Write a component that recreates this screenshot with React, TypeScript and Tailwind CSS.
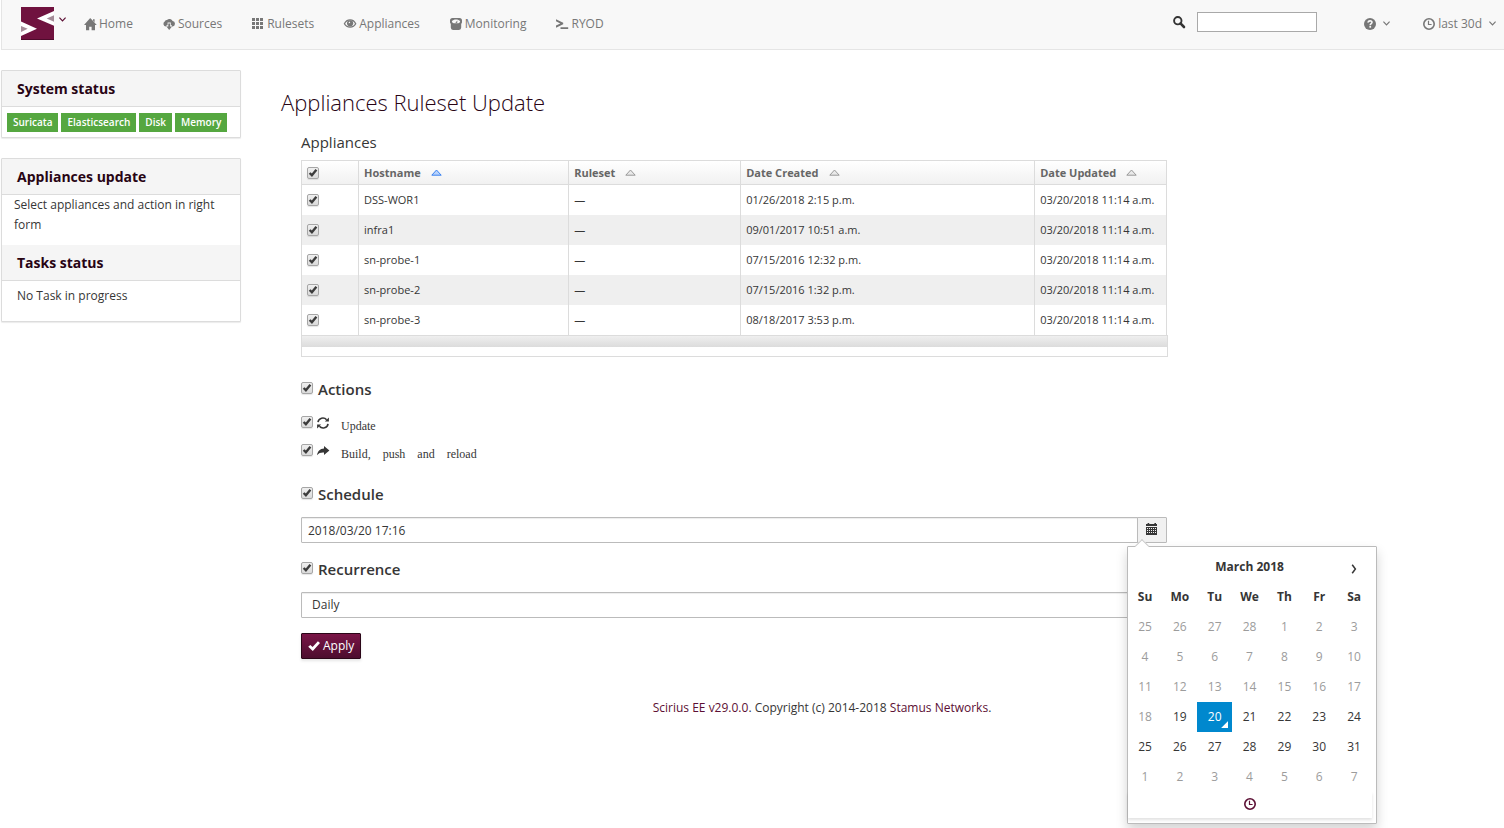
import { useId, useState } from "react";
import type { ReactNode } from "react";

function Icon({ children, className = "" }: { children: ReactNode; className?: string }) {
  return (
    <svg viewBox="0 0 12 12" className={`size-3 shrink-0 overflow-visible ${className}`} fill="currentColor" aria-hidden="true">
      {children}
    </svg>
  );
}

const HomeIcon = () => (
  <Icon>
    <path d="M6.5 0.2L12.8 7H11V12.2H7.6V8.7H5.2V12.2H2V7H0L6 0.2ZM9 1.2H10.6V4.2L9 2.6Z" />
  </Icon>
);
const CloudIcon = () => (
  <Icon>
    <path d="M3 8.6A2.7 2.7 0 0 1 1.7 3.6 2.1 2.1 0 0 1 4 1.9 3.4 3.4 0 0 1 9.6 3.1 2.8 2.8 0 0 1 9.8 8.6H8.9V7.3H7.8V4.6H4.6V7.3H3.4V8.6Z" />
    <path d="M5.3 5.5H7.1V8.4H9L6.2 12 3.4 8.4H5.3Z" />
  </Icon>
);
const GridIcon = () => (
  <Icon>
    <path d="M0 0h3v3H0zM4 0h3v3H4zM8 0h3v3H8zM0 4h3v3H0zM4 4h3v3H4zM8 4h3v3H8zM0 8h3v3H0zM4 8h3v3H4zM8 8h3v3H8z" />
  </Icon>
);
const EyeIcon = () => (
  <Icon>
    <path d="M0.4 5.8C2.8 0.6 9.4 0.6 11.7 5.8 9.4 10.2 2.8 10.2 0.4 5.8Z" fill="none" stroke="currentColor" strokeWidth="1.3" />
    <circle cx="6.1" cy="5.3" r="3.1" />
    <path d="M4.5 5.2A2 2 0 0 1 5.8 3.6L6.2 5Z" fill="#f8f8f8" />
  </Icon>
);
const ScaleIcon = () => (
  <Icon>
    <path d="M2.5 0H9.5Q12 0 12 2.5V4.5L11.2 6V9.6Q11.2 12 9 12H3Q0.8 12 0.8 9.6V6L0 4.5V2.5Q0 0 2.5 0Z" />
    <path d="M1.8 3.2C3.6 0.9 8.4 0.9 10.2 3.2 9.8 4.2 9.2 5.2 8.4 5.2H3.6C2.8 5.2 2.2 4.2 1.8 3.2Z" fill="#f8f8f8" />
    <path d="M5.3 4.7L7.4 2.5 7.2 4.9Z" />
  </Icon>
);
const ConsoleIcon = () => (
  <Icon>
    <path d="M0 1.2L7.2 4.8V6.2L0 9.7V7.6L4.3 5.5 0 3.3ZM4.5 9.2H12.2V11H4.5Z" />
  </Icon>
);
const SearchIcon = () => (
  <Icon>
    <circle cx="4.8" cy="4.7" r="3.7" fill="none" stroke="currentColor" strokeWidth="1.9" />
    <path d="M7.5 7.4L11 11" fill="none" stroke="currentColor" strokeWidth="2.6" strokeLinecap="round" />
  </Icon>
);
const HelpIcon = () => (
  <Icon>
    <circle cx="6" cy="6" r="6" />
    <path d="M4.2 4.6C4.1 2.4 8 2.3 8 4.3 8 5.7 6.2 5.5 6.2 7.2" fill="none" stroke="#f8f8f8" strokeWidth="1.6" />
    <rect x="5.4" y="8" width="1.7" height="1.7" fill="#f8f8f8" />
  </Icon>
);
const ClockIcon = () => (
  <Icon>
    <circle cx="6" cy="6" r="5.2" fill="none" stroke="currentColor" strokeWidth="1.6" />
    <path d="M5.5 2.8V6.5H8.6" fill="none" stroke="currentColor" strokeWidth="1.2" />
  </Icon>
);
const RefreshIcon = () => (
  <Icon className="-translate-y-px">
    <path d="M1 5.2C1.5 0.9 7 -0.3 9.6 2.8M11 6.8C10.5 11.1 5 12.3 2.4 9.2" fill="none" stroke="currentColor" strokeWidth="1.6" />
    <path d="M11.9 0.6V4.6H7.9ZM0.1 11.4V7.4H4.1Z" />
  </Icon>
);
const ShareIcon = () => (
  <Icon className="-translate-y-px">
    <path d="M7 1L12.4 5.5 7 10V7.6C4 7.4 2 7.9 0 10.2 0.4 6.4 3 3.6 7 3.4Z" />
  </Icon>
);
const CheckIcon = () => (
  <Icon>
    <path d="M0.2 6.8L2.3 4.9 4.6 7.1 9.9 1.3 12 3.1 4.8 11Z" />
  </Icon>
);
const CalendarIcon = () => (
  <Icon className="-translate-y-px">
    <path d="M0 1H1.6V0H3.2V1H8.4V0H10V1H11V3H0Z" />
    <path
      fillRule="evenodd"
      d="M0 4H11V12H0ZM1 5V6H2V5ZM3 5V6H4V5ZM5 5V6H6V5ZM7 5V6H8V5ZM9 5V6H10V5ZM1 7V8H2V7ZM3 7V8H4V7ZM5 7V8H6V7ZM7 7V8H8V7ZM9 7V8H10V7ZM1 9V10H2V9ZM3 9V10H4V9ZM5 9V10H6V9ZM7 9V10H8V9ZM9 9V10H10V9Z"
    />
  </Icon>
);

function Caret() {
  return (
    <svg viewBox="0 0 7 5" className="h-[5px] w-[7px] shrink-0" fill="none" stroke="currentColor" strokeWidth="1.2" aria-hidden="true">
      <path d="M0.4 0.6L3.5 3.8 6.6 0.6" />
    </svg>
  );
}

function Logo() {
  return (
    <svg viewBox="0 0 33 33" className="size-[33px]" aria-hidden="true">
      <rect width="33" height="33" fill="#70123f" />
      <rect y="32" width="33" height="1" fill="#4d0a2b" />
      <path d="M0 14.5L16 21.7 0 29ZM33 4L16 11.5 33 18.8Z" fill="#fff" />
      <path d="M0 19L6.7 21.7 0 25ZM33 8.3L25.7 11.6 33 14.8Z" fill="#a48b97" />
    </svg>
  );
}

function Checkbox({ id, label, checked, onChange }: { id?: string; label?: string; checked?: boolean; onChange?: (v: boolean) => void }) {
  const [own, setOwn] = useState(true);
  const on = checked ?? own;
  return (
    <span className="inline-grid size-3 shrink-0">
      <input
        id={id}
        type="checkbox"
        aria-label={label}
        checked={on}
        onChange={(e) => (onChange ?? setOwn)(e.target.checked)}
        className="col-start-1 row-start-1 size-3 appearance-none rounded-[2px] border border-[#a6a6a6] bg-linear-to-b from-[#efefef] to-[#dadada] shadow-[0_1px_1px_rgba(0,0,0,0.1)]"
      />
      {on && (
        <svg viewBox="0 0 12 12" className="pointer-events-none col-start-1 row-start-1 size-3" aria-hidden="true">
          <path d="M2.6 6L4.9 8.2 9.4 2.8" fill="none" stroke="#3c3c3c" strokeWidth="2.4" />
        </svg>
      )}
    </span>
  );
}

const NAV = [
  { label: "Home", icon: <HomeIcon /> },
  { label: "Sources", icon: <CloudIcon /> },
  { label: "Rulesets", icon: <GridIcon /> },
  { label: "Appliances", icon: <EyeIcon /> },
  { label: "Monitoring", icon: <ScaleIcon /> },
  { label: "RYOD", icon: <ConsoleIcon /> },
];

function NavBar() {
  return (
    <header className="flex h-[50px] items-center border-b border-l border-[#e5e5e5] bg-[#f8f8f8] pb-0.5 text-[#777]">
      <button type="button" aria-label="Stamus menu" className="ml-[19px] flex items-center gap-[5px] text-[#5c0f34]">
        <Logo />
        <span className="pb-2">
          <Caret />
        </span>
      </button>
      <nav className="ml-[3px] flex">
        {NAV.map((n) => (
          <a key={n.label} href="#" className="flex items-center gap-[3px] px-[15px] py-3 leading-5">
            {n.icon}
            {n.label}
          </a>
        ))}
      </nav>
      <form className="ml-auto flex items-center gap-3 pb-1 text-[#333]" onSubmit={(e) => e.preventDefault()}>
        <label htmlFor="search" aria-label="Search">
          <SearchIcon />
        </label>
        <input id="search" type="text" className="h-5 w-[120px] border border-[#a9a9a9] bg-white px-1" />
      </form>
      <button type="button" aria-label="Help" className="ml-[47px] flex items-center gap-[7px]">
        <HelpIcon />
        <Caret />
      </button>
      <button type="button" className="mr-2 ml-[33px] flex items-center gap-[3px] leading-5">
        <ClockIcon />
        <span className="mr-1">last 30d</span>
        <Caret />
      </button>
    </header>
  );
}

function PanelTitle({ children }: { children: ReactNode }) {
  return <h2 className="border-b border-[#dcdcdc] bg-[#f5f5f5] px-[15px] py-2 text-sm leading-[19px] font-bold text-[#280414]">{children}</h2>;
}

function Sidebar() {
  return (
    <aside className="flex w-60 shrink-0 flex-col gap-5">
      <section className="rounded-[1px] border border-[#dcdcdc] bg-white shadow-[0_1px_1px_rgba(0,0,0,0.08)]">
        <PanelTitle>System status</PanelTitle>
        <ul className="flex gap-[3px] px-[5px] pt-1.5 pb-[5px]">
          {["Suricata", "Elasticsearch", "Disk", "Memory"].map((s) => (
            <li key={s} className="bg-[#55a740] px-1.5 text-[10px] leading-[19px] font-semibold text-white">
              {s}
            </li>
          ))}
        </ul>
      </section>
      <section className="rounded-[1px] border border-[#dcdcdc] bg-white shadow-[0_1px_1px_rgba(0,0,0,0.08)]">
        <PanelTitle>Appliances update</PanelTitle>
        <p className="px-3 pb-2.5 leading-5">Select appliances and action in right form</p>
        <PanelTitle>Tasks status</PanelTitle>
        <p className="px-[15px] pt-[5px] pb-[15px] leading-5">No Task in progress</p>
      </section>
    </aside>
  );
}

const ROWS = [
  ["DSS-WOR1", "—", "01/26/2018 2:15 p.m.", "03/20/2018 11:14 a.m."],
  ["infra1", "—", "09/01/2017 10:51 a.m.", "03/20/2018 11:14 a.m."],
  ["sn-probe-1", "—", "07/15/2016 12:32 p.m.", "03/20/2018 11:14 a.m."],
  ["sn-probe-2", "—", "07/15/2016 1:32 p.m.", "03/20/2018 11:14 a.m."],
  ["sn-probe-3", "—", "08/18/2017 3:53 p.m.", "03/20/2018 11:14 a.m."],
];

function SortMark({ active }: { active: boolean }) {
  return (
    <svg viewBox="0 0 11 7" className="h-[7px] w-[11px]" aria-hidden="true">
      <path d="M0.8 6.2L5.5 1 10.2 6.2Z" fill={active ? "#b9d3fb" : "#e9e9e9"} stroke={active ? "#3b82f0" : "#999"} strokeWidth="1" />
    </svg>
  );
}

function ApplianceTable() {
  const [picked, setPicked] = useState(ROWS.map(() => true));
  return (
    <div>
      <table className="w-full table-fixed border-separate border-spacing-0 border-t border-l border-[#dcdcdc] text-left text-[11px] leading-4">
        <colgroup>
          <col className="w-[6.6%]" />
          <col className="w-[24.3%]" />
          <col className="w-[19.9%]" />
          <col className="w-[34%]" />
          <col />
        </colgroup>
        <thead>
          <tr className="h-6">
            <th className="border-r border-b border-[#dcdcdc] bg-linear-to-b from-white to-[#f1f1f1] px-[5px] align-middle">
              <span className="flex">
                <Checkbox label="Select all appliances" checked={picked.every(Boolean)} onChange={(v) => setPicked(ROWS.map(() => v))} />
              </span>
            </th>
            {["Hostname", "Ruleset", "Date Created", "Date Updated"].map((h, i) => (
              <th key={h} className="border-r border-b border-[#dcdcdc] bg-linear-to-b from-white to-[#f1f1f1] px-[5px] font-bold text-[#666]">
                <span className="flex items-center gap-2.5">
                  {h}
                  <SortMark active={i === 0} />
                </span>
              </th>
            ))}
          </tr>
        </thead>
        <tbody>
          {ROWS.map((r, i) => (
            <tr key={r[0]} className="h-[30px] even:bg-[#efefef]">
              <td className="border-r border-[#dcdcdc] px-[5px]">
                <span className="flex">
                  <Checkbox label={`Select ${r[0]}`} checked={picked[i]} onChange={(v) => setPicked(picked.map((p, j) => (j === i ? v : p)))} />
                </span>
              </td>
              {r.map((c, j) => (
                <td key={j} className="border-r border-[#dcdcdc] px-[5px]">
                  {c}
                </td>
              ))}
            </tr>
          ))}
        </tbody>
      </table>
      <div className="-mr-px h-[22px] border border-[#dcdcdc]">
        <div className="h-[11px] bg-linear-to-b from-[#efefef] to-[#dcdcdc]" />
      </div>
    </div>
  );
}

function Section({ title }: { title: string }) {
  const id = useId();
  return (
    <h3 className="flex items-center gap-[5px] text-[15px] leading-5 font-semibold">
      <span className="flex pb-[3px]">
        <Checkbox id={id} />
      </span>
      <label htmlFor={id}>{title}</label>
    </h3>
  );
}

function Action({ icon, text }: { icon: ReactNode; text: string }) {
  const id = useId();
  return (
    <div className="flex h-7 items-start gap-1">
      <Checkbox id={id} />
      <label htmlFor={id} className="flex items-start gap-3 pt-0.5">
        {icon}
        <span className="font-['Liberation_Serif',serif] text-xs leading-4 whitespace-pre">{text}</span>
      </label>
    </div>
  );
}

const WEEKS = [
  [25, 26, 27, 28, 1, 2, 3],
  [4, 5, 6, 7, 8, 9, 10],
  [11, 12, 13, 14, 15, 16, 17],
  [18, 19, 20, 21, 22, 23, 24],
  [25, 26, 27, 28, 29, 30, 31],
  [1, 2, 3, 4, 5, 6, 7],
];

function DatePicker() {
  return (
    <div className="absolute top-[29px] left-[-10px] z-10 w-[250px] rounded-[1px] border border-[#bbb] bg-white pt-[5px] pr-1 pb-[5px] shadow-[0_6px_12px_rgba(0,0,0,0.175)]">
      <span className="absolute top-[-6px] left-[9px] size-2.5 rotate-45 border-t border-l border-[#ccc] bg-white" />
      <table className="relative w-full table-fixed border-collapse bg-white text-center">
        <thead>
          <tr className="h-[30px]">
            <th />
            <th colSpan={5} className="font-bold">
              March 2018
            </th>
            <th>
              <button type="button" aria-label="Next month" className="flex w-full justify-center pt-1">
                <svg viewBox="0 0 6 10" className="h-2.5 w-1.5" fill="none" stroke="currentColor" strokeWidth="1.5" aria-hidden="true">
                  <path d="M1.2 0.8L4.4 5 1.2 9.2" />
                </svg>
              </button>
            </th>
          </tr>
          <tr className="h-[30px]">
            {["Su", "Mo", "Tu", "We", "Th", "Fr", "Sa"].map((d) => (
              <th key={d} className="font-bold">
                {d}
              </th>
            ))}
          </tr>
        </thead>
        <tbody>
          {WEEKS.map((week, w) => (
            <tr key={w} className="h-[30px]">
              {week.map((d, i) => {
                const muted = w < 3 || w === 5 || (w === 3 && i === 0);
                const today = w === 3 && d === 20;
                return (
                  <td key={i} className={today ? "relative bg-[#0088ce] p-0 text-white" : muted ? "p-0 text-[#9c9c9c]" : "p-0"}>
                    <button type="button" className="block h-[30px] w-full">
                      {d}
                    </button>
                    {today && <span className="absolute right-1 bottom-1 size-[7px] bg-white [clip-path:polygon(100%_0,100%_100%,0_100%)]" />}
                  </td>
                );
              })}
            </tr>
          ))}
        </tbody>
      </table>
      <button type="button" aria-label="Pick time" className="flex h-[26px] w-full items-center justify-center bg-white pb-0.5 text-[#5c0f34] shadow-[0_2px_3px_rgba(0,0,0,0.12)]">
        <ClockIcon />
      </button>
    </div>
  );
}

function UpdateForm() {
  const [date, setDate] = useState("2018/03/20 17:16");
  return (
    <form className="ml-5 w-4/5" onSubmit={(e) => e.preventDefault()}>
      <h2 className="pb-2 text-[15px] leading-5">Appliances</h2>
      <ApplianceTable />
      <div className="pt-[22px] pb-[17px]">
        <Section title="Actions" />
      </div>
      <Action icon={<RefreshIcon />} text="Update" />
      <Action icon={<ShareIcon />} text={"Build,    push    and    reload"} />
      <div className="pt-3 pb-[13px]">
        <Section title="Schedule" />
      </div>
      <div className="flex">
        <input
          type="text"
          aria-label="Schedule date"
          value={date}
          onChange={(e) => setDate(e.target.value)}
          className="h-[26px] min-w-0 flex-1 rounded-l-[1px] border border-[#bbb] bg-white px-1.5 shadow-[inset_0_1px_1px_rgba(0,0,0,0.075)]"
        />
        <div className="relative -ml-px">
          <button type="button" aria-label="Open calendar" className="flex h-[26px] w-[30px] items-center justify-center rounded-r-[1px] border border-[#bbb] bg-[#f1f1f1]">
            <CalendarIcon />
          </button>
          <DatePicker />
        </div>
      </div>
      <div className="pt-4 pb-[13px]">
        <Section title="Recurrence" />
      </div>
      <select
        aria-label="Recurrence"
        className="block h-[26px] w-full appearance-none rounded-[1px] border border-[#bbb] bg-white px-2.5 shadow-[inset_0_1px_1px_rgba(0,0,0,0.075)]"
      >
        <option>Daily</option>
      </select>
      <button
        type="submit"
        className="mt-[15px] flex h-[26px] items-center gap-[3px] rounded-[1px] border border-[#2b0618] bg-linear-to-b from-[#7a1547] to-[#4d0d2e] px-1.5 font-medium text-white shadow-[0_2px_3px_rgba(0,0,0,0.1)]"
      >
        <CheckIcon />
        Apply
      </button>
    </form>
  );
}

export default function App() {
  return (
    <div className="min-h-screen bg-white pl-px font-['Open_Sans',sans-serif] text-xs text-[#363636]">
      <NavBar />
      <div className="flex gap-10 pt-5">
        <Sidebar />
        <main className="mr-[141px] min-w-0 flex-1 pt-[17px]">
          <h1 className="pb-[15px] text-[22px] leading-[30px] font-light text-[#280414]">Appliances Ruleset Update</h1>
          <UpdateForm />
          <footer className="pt-[39px] text-center leading-5">
            <a href="#" className="text-[#5c0f34]">
              Scirius EE v29.0.0
            </a>
            . Copyright (c) 2014-2018{" "}
            <a href="#" className="text-[#5c0f34]">
              Stamus Networks
            </a>
            .
          </footer>
        </main>
      </div>
    </div>
  );
}
